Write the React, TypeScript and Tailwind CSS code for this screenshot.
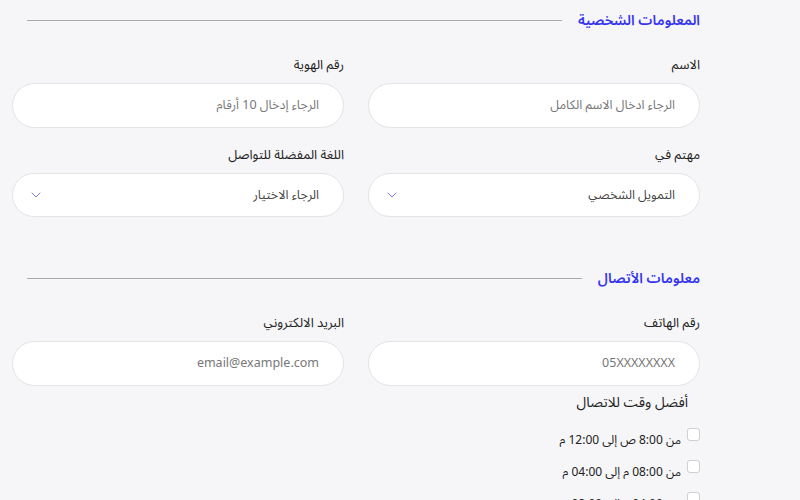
import { ChevronDown } from 'lucide-react'

const font = { fontFamily: '"Noto Sans", "Noto Sans Arabic UI", "Noto Sans Arabic", "Noto Naskh Arabic", "Noto Sans CJK SC", sans-serif' }

function SectionTitle({ title }: { title: string }) {
  return (
    <div className="flex items-center gap-4 pl-[15px] h-6">
      <h2 className="text-[14px] font-semibold text-[#3535f0] whitespace-nowrap leading-6">{title}</h2>
      <div className="flex-1 h-px bg-[#a8a8ad]" />
    </div>
  )
}

function Field({ label, placeholder }: { label: string; placeholder: string }) {
  return (
    <div>
      <label className="block text-[13px] text-[#222] leading-5 h-5 mb-[9px]">{label}</label>
      <div className="h-[45px] rounded-full bg-white border border-[#e4e4e8] flex items-center px-6 text-[12.5px] text-[#777]">
        {placeholder}
      </div>
    </div>
  )
}

function SelectField({ label, value }: { label: string; value: string }) {
  return (
    <div>
      <label className="block text-[13px] text-[#222] leading-5 h-5 mb-[9px]">{label}</label>
      <div className="h-[44px] rounded-full bg-white border border-[#e4e4e8] flex items-center justify-between pr-6 pl-[15px] text-[12.5px] text-[#444]">
        <span>{value}</span>
        <ChevronDown className="h-4 w-4 text-[#7b7bef]" strokeWidth={1.5} />
      </div>
    </div>
  )
}

const TIMES = ['من 8:00 ص إلى 12:00 م', 'من 08:00 م إلى 04:00 م', 'من 04:00 م إلى 08:00 م']

export default function App() {
  return (
    <div dir="rtl" style={font} className="h-[500px] bg-[#f6f6f8] pr-[100px] pl-3 pt-2 overflow-hidden">
      <SectionTitle title="المعلومات الشخصية" />

      <div className="grid grid-cols-2 gap-x-6 mt-[22px]">
        <Field label="الاسم" placeholder="الرجاء ادخال الاسم الكامل" />
        <Field label="رقم الهوية" placeholder="الرجاء إدخال 10 أرقام" />
      </div>
      <div className="grid grid-cols-2 gap-x-6 mt-[16px]">
        <SelectField label="مهتم في" value="التمويل الشخصي" />
        <SelectField label="اللغة المفضلة للتواصل" value="الرجاء الاختيار" />
      </div>

      <div className="mt-[49px]">
        <SectionTitle title="معلومات الأتصال" />
      </div>

      <div className="grid grid-cols-2 gap-x-6 mt-[22px]">
        <Field label="رقم الهاتف" placeholder="05XXXXXXXX" />
        <Field label="البريد الالكتروني" placeholder="email@example.com" />
      </div>

      <p className="pr-3 mt-[4px] text-[14px] text-[#222] leading-6 h-6">أفضل وقت للاتصال</p>
      <div className="mt-[14px] flex flex-col gap-[12px]">
        {TIMES.map((t) => (
          <label key={t} className="flex items-start gap-[6px] text-[12px] text-[#222] leading-5 h-5">
            <span className="h-[13px] w-[13px] rounded-[3px] border border-[#cfcfd4] bg-white shrink-0" />
            <span className="mt-[2px]">{t}</span>
          </label>
        ))}
      </div>
    </div>
  )
}
